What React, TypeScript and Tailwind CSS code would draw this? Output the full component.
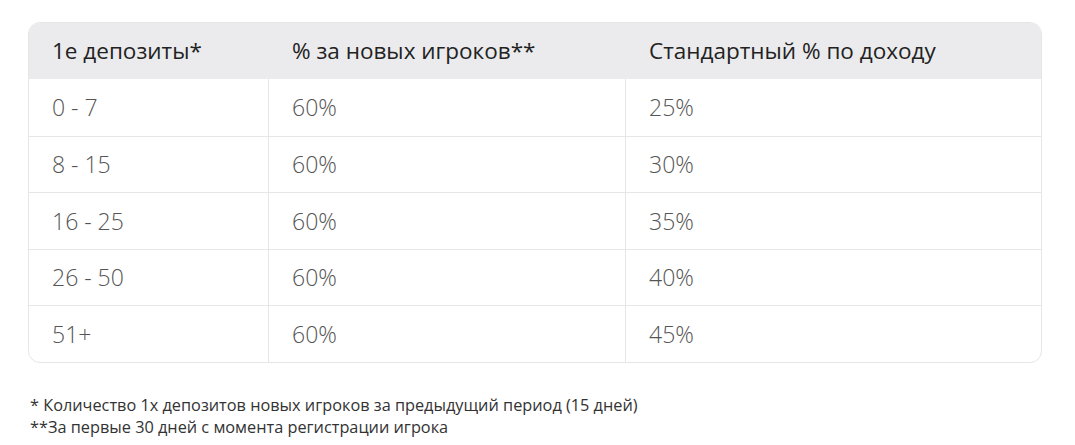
import React from "react";

const rows = [
  ["0 - 7", "60%", "25%"],
  ["8 - 15", "60%", "30%"],
  ["16 - 25", "60%", "35%"],
  ["26 - 50", "60%", "40%"],
  ["51+", "60%", "45%"],
];

export default function App() {
  return (
    <div className="w-[1075px] h-[445px] bg-white pt-[22px] pl-[28px]" style={{ fontFamily: '"Open Sans", sans-serif' }}>
      <div className="w-[1014px] rounded-[12px] border border-[#e6e6e6] overflow-hidden">
        <div className="grid grid-cols-[240px_357px_1fr] h-[56px] bg-[#ebebed] items-center text-[22.5px] text-[#222]">
          <div className="pl-[23px]">1е депозиты*</div>
          <div className="pl-[23px]">% за новых игроков**</div>
          <div className="pl-[23px]">Стандартный % по доходу</div>
        </div>
        {rows.map((r, i) => (
          <div key={i} className={`grid grid-cols-[240px_357px_1fr] h-[56.5px] items-center text-[23px] font-light text-[#555] ${i > 0 ? "border-t border-[#e6e6e6]" : ""}`}>
            <div className="pl-[23px] h-full flex items-center border-r border-[#e6e6e6]">{r[0]}</div>
            <div className="pl-[23px] h-full flex items-center border-r border-[#e6e6e6]">{r[1]}</div>
            <div className="pl-[23px] h-full flex items-center">{r[2]}</div>
          </div>
        ))}
      </div>
      <div className="mt-[31px] pl-[2px] text-[16.3px] leading-[22px] text-[#333]">
        <div>* Количество 1х депозитов новых игроков за предыдущий период (15 дней)</div>
        <div>**За первые 30 дней с момента регистрации игрока</div>
      </div>
    </div>
  );
}
